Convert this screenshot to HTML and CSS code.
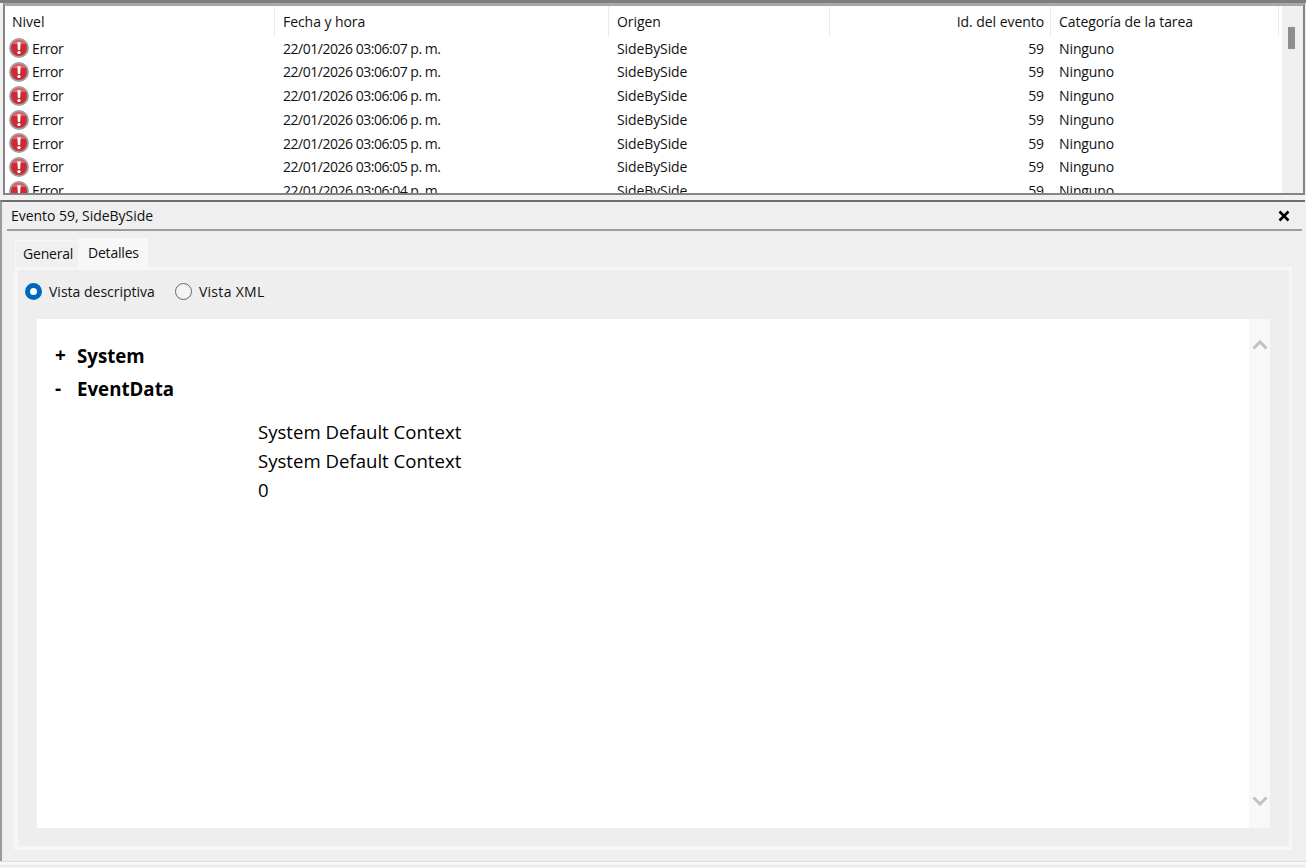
FILE: index.html
```html
<!DOCTYPE html>
<html lang="es">
<head>
<meta charset="utf-8">
<title>Evento 59, SideBySide</title>
<link rel="stylesheet" href="styles.css">
</head>
<body>
<svg class="defs" width="0" height="0" aria-hidden="true">
  <symbol id="err" viewBox="0 0 20 20">
    <circle cx="10" cy="10" r="9" fill="#cf2a33" stroke="#9e9e9e" stroke-width="2"/>
    <path d="M10 2a8 8 0 0 1 6.900 4H3.100A8 8 0 0 1 10 2z" fill="#e2626a"/>
    <path d="M8.300 4.200h3.400l-.6 7.800H8.900z" fill="#fff"/>
    <circle cx="10" cy="14.600" r="1.700" fill="#fff"/>
  </symbol>
</svg>
<section class="list-frame">
  <div class="list">
    <div class="table">
      <div class="row head">
        <div class="cell c1">Nivel</div>
        <div class="cell c2">Fecha y hora</div>
        <div class="cell c3">Origen</div>
        <div class="cell c4">Id. del evento</div>
        <div class="cell c5">Categoría de la tarea</div>
      </div>
      <div class="row"><div class="cell c1"><svg class="ico"><use href="#err"/></svg>Error</div><div class="cell c2 date">22/01/2026 03:06:07 p. m.</div><div class="cell c3">SideBySide</div><div class="cell c4">59</div><div class="cell c5">Ninguno</div></div>
      <div class="row"><div class="cell c1"><svg class="ico"><use href="#err"/></svg>Error</div><div class="cell c2 date">22/01/2026 03:06:07 p. m.</div><div class="cell c3">SideBySide</div><div class="cell c4">59</div><div class="cell c5">Ninguno</div></div>
      <div class="row"><div class="cell c1"><svg class="ico"><use href="#err"/></svg>Error</div><div class="cell c2 date">22/01/2026 03:06:06 p. m.</div><div class="cell c3">SideBySide</div><div class="cell c4">59</div><div class="cell c5">Ninguno</div></div>
      <div class="row"><div class="cell c1"><svg class="ico"><use href="#err"/></svg>Error</div><div class="cell c2 date">22/01/2026 03:06:06 p. m.</div><div class="cell c3">SideBySide</div><div class="cell c4">59</div><div class="cell c5">Ninguno</div></div>
      <div class="row"><div class="cell c1"><svg class="ico"><use href="#err"/></svg>Error</div><div class="cell c2 date">22/01/2026 03:06:05 p. m.</div><div class="cell c3">SideBySide</div><div class="cell c4">59</div><div class="cell c5">Ninguno</div></div>
      <div class="row"><div class="cell c1"><svg class="ico"><use href="#err"/></svg>Error</div><div class="cell c2 date">22/01/2026 03:06:05 p. m.</div><div class="cell c3">SideBySide</div><div class="cell c4">59</div><div class="cell c5">Ninguno</div></div>
      <div class="row"><div class="cell c1"><svg class="ico"><use href="#err"/></svg>Error</div><div class="cell c2 date">22/01/2026 03:06:04 p. m.</div><div class="cell c3">SideBySide</div><div class="cell c4">59</div><div class="cell c5">Ninguno</div></div>
    </div>
    <div class="vbar"><div class="thumb"></div></div>
  </div>
</section>
<section class="detail">
  <header class="detail-head">
    <span class="detail-title">Evento 59, SideBySide</span>
    <svg class="close" viewBox="0 0 12 12"><path d="M1.500 1.500l9 9M10.500 1.500l-9 9" stroke="#000" stroke-width="2.600" fill="none"/></svg>
  </header>
  <div class="tabs">
    <div class="tab">General</div>
    <div class="tab active">Detalles</div>
  </div>
  <div class="tab-panel">
    <div class="radios">
      <label class="radio"><span class="dot on"></span>Vista descriptiva</label>
      <label class="radio wide"><span class="dot"></span>Vista XML</label>
    </div>
    <div class="viewer">
      <div class="doc">
        <div class="node"><span class="sign">+</span>System</div>
        <div class="node"><span class="sign">-</span>EventData</div>
        <div class="values">
          <div>System Default Context</div>
          <div>System Default Context</div>
          <div>0</div>
        </div>
      </div>
      <div class="vscroll">
        <svg class="chev" viewBox="0 0 16 10"><path d="M1.500 8.500L8 2l6.500 6.500" stroke="#c2c2c2" stroke-width="3" fill="none"/></svg>
        <svg class="chev" viewBox="0 0 16 10"><path d="M1.500 1.500L8 8l6.500-6.500" stroke="#c2c2c2" stroke-width="3" fill="none"/></svg>
      </div>
    </div>
  </div>
</section>
<div class="foot"></div>
</body>
</html>
```
FILE: styles.css
```css
html, body { margin: 0; padding: 0; height: 868px; overflow: hidden; }
body {
  background: #f0f0f0;
  color: #111;
  font-family: "Open Sans", "Noto Sans", "Liberation Sans", sans-serif;
  display: flex;
  flex-direction: column;
}
.defs { position: absolute; }

.list-frame {
  height: 195px;
  box-sizing: border-box;
  border-top: 3px solid #7e7e7e;
  padding: 0 1px 0 3px;
  background: #f0f0f0;
  flex: none;
}
.list {
  height: 192px;
  box-sizing: border-box;
  border: 2px solid #858585;
  border-top: 3px solid #a8a8a8;
  border-left-width: 2px;
  background: #fff;
  display: flex;
  overflow: hidden;
}
.table { flex: 1; min-width: 0; overflow: hidden; font-size: 14px; }
.row {
  display: grid;
  grid-template-columns: 270px 334px 221px 221px 1fr;
  height: 23.75px;
  line-height: 23.75px;
  white-space: nowrap;
  letter-spacing: -0.1px;
}
.row.head { height: 30.5px; line-height: 31px; letter-spacing: -0.06px; }
.head .cell { box-shadow: inset -1px 0 0 #ececec; }
.cell { padding: 0 7px; min-width: 0; }
.c1 { display: flex; align-items: center; padding-left: 4px; letter-spacing: -0.4px; }
.head .c1 { padding-left: 7px; letter-spacing: 0; }
.c2 { padding-left: 8px; }
.date { letter-spacing: -0.48px; }
.c3 { padding-left: 8px; }
.c4 { text-align: right; }
.c5 { padding-left: 8px; }
.ico { width: 20px; height: 20px; margin-right: 3px; flex: none; }

.vbar { width: 21px; background: #f0f0f0; flex: none; margin-left: 3px; }
.thumb { width: 7px; height: 22px; background: #8e8e8e; margin: 21px 0 0 6px; }

.detail {
  flex: 1;
  display: flex;
  flex-direction: column;
  border-top: 2px solid #6f6f6f;
  margin-top: 5px;
  margin-right: 1px;
  border-left: 2px solid #9a9a9a;
  background: #efefef;
  min-height: 0;
}
.detail-head {
  height: 27px;
  margin: 0 3px 0 5px;
  padding: 0 6px 0 4px;
  border-bottom: 2px solid #9c9c9c;
  display: flex;
  align-items: center;
  justify-content: space-between;
  font-size: 14px;
  letter-spacing: -0.04px;
}
.close { width: 12px; height: 12px; margin-right: 6px; }
.tabs {
  display: flex;
  align-items: flex-end;
  height: 36px;
  margin-left: 13px;
  font-size: 14px;
  letter-spacing: -0.2px;
}
.tab { padding: 0 5px 0 8px; height: 27px; line-height: 28px; background: #f0f0f0; box-shadow: inset 1px 1px 0 #f6f6f6; width: 50px; }
.tab.active { background: #f7f7f7; height: 29px; line-height: 30px; padding: 0 9px 0 10px; width: auto; }

.tab-panel {
  margin: 0 13px 11px 12px;
  border: 3px solid #f6f6f6;
  border-left-width: 4px;
  border-bottom-width: 4px;
  background: #eeeeee;
  flex: 1;
  display: flex;
  flex-direction: column;
  min-height: 0;
}
.radios {
  height: 49px;
  flex: none;
  display: flex;
  align-items: center;
  gap: 20px;
  padding: 0 0 6px 7px;
  box-sizing: border-box;
  font-size: 14px;
}
.radio { display: flex; align-items: center; gap: 7px; }
.radio.wide { letter-spacing: 0.3px; }
.dot {
  width: 17px;
  height: 17px;
  box-sizing: border-box;
  border-radius: 50%;
  border: 1.5px solid #666;
  background: #f4f4f4;
}
.dot.on { border: 5px solid #0067c0; background: #fff; }

.viewer {
  flex: 1;
  margin: 0 19px 18px 19px;
  display: flex;
  min-height: 0;
  background: #fff;
}
.doc { flex: 1; padding: 19.5px 0 0 17px; color: #000; }
.node { font-size: 18.7px; font-weight: 700; height: 33.5px; line-height: 33.5px; display: flex; }
.sign { width: 23px; font-weight: 700; font-size: 19px; padding-left: 1px; box-sizing: border-box; }
.values { margin: 11.5px 0 0 204px; font-size: 18.6px; line-height: 29px; }
.vscroll {
  width: 21px;
  background: #f8f8f8;
  flex: none;
  display: flex;
  flex-direction: column;
  justify-content: space-between;
  align-items: center;
  padding: 21px 0 22px;
}
.chev { width: 16px; height: 10px; }
.foot { height: 6px; flex: none; border-top: 1px solid #dedede; background: linear-gradient(#f9f9f9, #f9f9f9 50%, #e6e6e6 50%, #f6f6f6); }
```
